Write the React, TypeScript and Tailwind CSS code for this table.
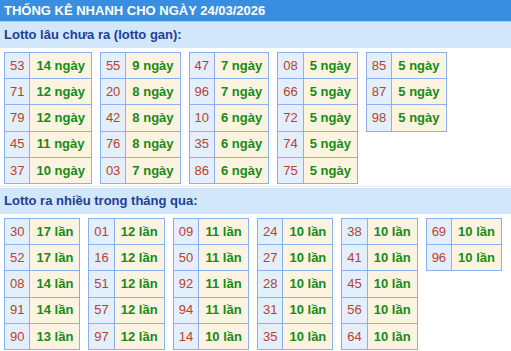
const gan: [string, string][][] = [
  [['53', '14 ngày'], ['71', '12 ngày'], ['79', '12 ngày'], ['45', '11 ngày'], ['37', '10 ngày']],
  [['55', '9 ngày'], ['20', '8 ngày'], ['42', '8 ngày'], ['76', '8 ngày'], ['03', '7 ngày']],
  [['47', '7 ngày'], ['96', '7 ngày'], ['10', '6 ngày'], ['35', '6 ngày'], ['86', '6 ngày']],
  [['08', '5 ngày'], ['66', '5 ngày'], ['72', '5 ngày'], ['74', '5 ngày'], ['75', '5 ngày']],
  [['85', '5 ngày'], ['87', '5 ngày'], ['98', '5 ngày']],
]

const nhieu: [string, string][][] = [
  [['30', '17 lần'], ['52', '17 lần'], ['08', '14 lần'], ['91', '14 lần'], ['90', '13 lần']],
  [['01', '12 lần'], ['16', '12 lần'], ['51', '12 lần'], ['57', '12 lần'], ['97', '12 lần']],
  [['09', '11 lần'], ['50', '11 lần'], ['92', '11 lần'], ['94', '11 lần'], ['14', '10 lần']],
  [['24', '10 lần'], ['27', '10 lần'], ['28', '10 lần'], ['31', '10 lần'], ['35', '10 lần']],
  [['38', '10 lần'], ['41', '10 lần'], ['45', '10 lần'], ['56', '10 lần'], ['64', '10 lần']],
  [['69', '10 lần'], ['96', '10 lần']],
]

function StatTable({ rows }: { rows: [string, string][] }) {
  return (
    <table className="border-collapse border border-[#8ab0f0] self-start">
      <tbody>
        {rows.map(([num, val], i) => (
          <tr key={i} className="h-[26.2px]">
            <td className="border border-[#8ab0f0] bg-[#e3effd] px-[5px] text-center text-[#b8412a] text-[13px]">{num}</td>
            <td className="border border-[#8ab0f0] bg-[#fdf3e1] px-[6px] text-center text-[#178a17] text-[13px] font-bold">{val}</td>
          </tr>
        ))}
      </tbody>
    </table>
  )
}

function Section({ title, groups }: { title: string; groups: [string, string][][] }) {
  return (
    <div>
      <div className="h-[26px] bg-[#d3e7fb] flex items-center px-[4px] text-[13px] font-bold text-[#1d3f95]">
        {title}
      </div>
      <div className="flex flex-wrap gap-x-[8px] pl-[4px] pt-[4px]">
        {groups.map((g, i) => (
          <StatTable key={i} rows={g} />
        ))}
      </div>
    </div>
  )
}

export default function App() {
  return (
    <div className="w-[511px] h-[351px] bg-white overflow-hidden font-['Liberation_Sans',Arial,sans-serif]">
      <div className="h-[22px] bg-[#3a8ee0] border-b border-[#b9c9d8] flex items-center px-[4px] text-[13px] font-bold text-white">
        THỐNG KÊ NHANH CHO NGÀY 24/03/2026
      </div>
      <Section title="Lotto lâu chưa ra (lotto gan):" groups={gan} />
      <div className="h-[3px] border-b border-[#e4ecf4]" />
      <div className="h-[1px]" />
      <Section title="Lotto ra nhiều trong tháng qua:" groups={nhieu} />
    </div>
  )
}
